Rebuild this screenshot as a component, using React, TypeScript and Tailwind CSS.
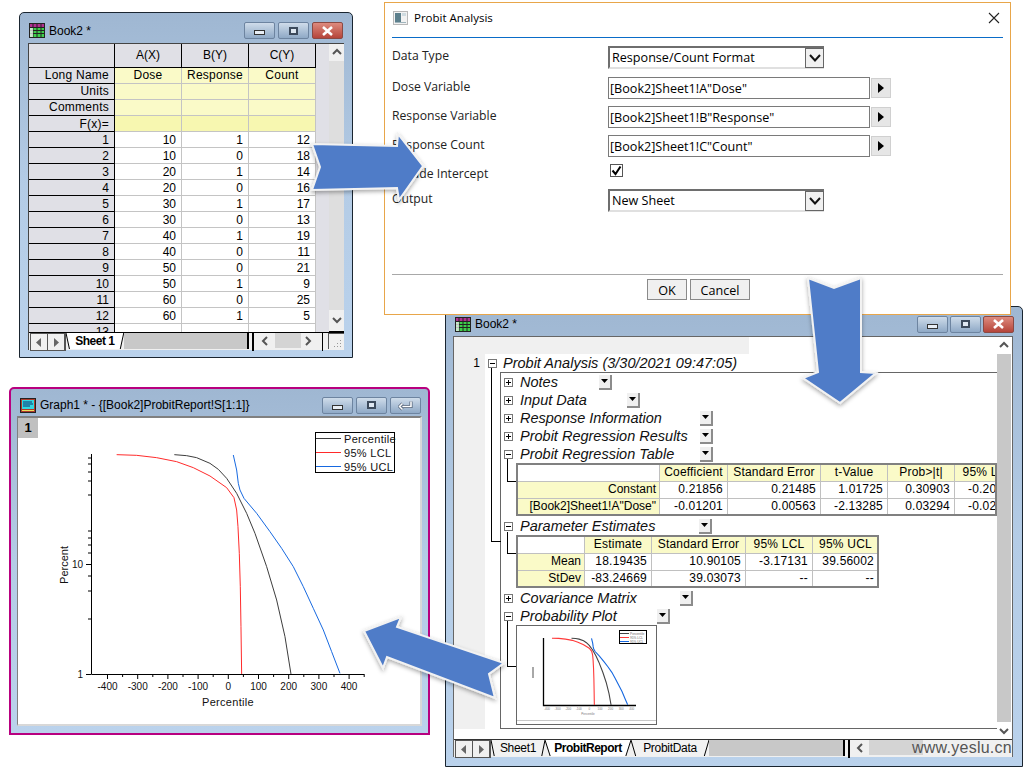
import type { ReactNode } from 'react';

const FONT = "font-['Liberation_Sans',Arial,sans-serif]";

const sheetRows = [
  ['1', '10', '1', '12'],
  ['2', '10', '0', '18'],
  ['3', '20', '1', '14'],
  ['4', '20', '0', '16'],
  ['5', '30', '1', '17'],
  ['6', '30', '0', '13'],
  ['7', '40', '1', '19'],
  ['8', '40', '0', '11'],
  ['9', '50', '0', '21'],
  ['10', '50', '1', '9'],
  ['11', '60', '0', '25'],
  ['12', '60', '1', '5'],
  ['13', '', '', ''],
];

const labelRows = [
  { name: 'Long Name', cells: ['Dose', 'Response', 'Count'], bg: 'bg-[#fafac8]', leading: '' },
  { name: 'Units', cells: ['', '', ''], bg: 'bg-[#fafac8]', leading: '' },
  { name: 'Comments', cells: ['', '', ''], bg: 'bg-[#fafac8]', leading: '' },
  { name: 'F(x)=', cells: ['', '', ''], bg: 'bg-[#f7f7b0]', leading: 'leading-[17px]' },
];

const blackCurve = '493,104 530,107 560,113 600,130 625,148 650,175 680,220 710,280 735,340 770,440 800,540 825,650 843,762';
const redCurve = '320,104 380,106 440,113 500,125 550,143 600,168 650,203 672,233 680,270 684,320 688,400 691,500 693,620 695,762';
const blueCurve = '670,105 680,150 685,190 690,210 702,235 740,280 780,335 815,385 850,440 880,500 910,565 940,630 965,695 990,760';

function SheetIcon() {
  return (
    <svg width="16" height="15" viewBox="0 0 16 15" className="shrink-0">
      <rect x="0.5" y="0.5" width="15" height="14" fill="#3ecf4a" stroke="#222" />
      <rect x="1" y="1" width="14" height="3" fill="#b03090" />
      <path d="M1 4.5H15M1 7.5H15M1 10.5H15M4 1V14M8 1V14M12 1V14" stroke="#222" strokeWidth="1" />
      <rect x="1" y="5" width="3" height="9" fill="#f4f4f4" opacity="0.75" />
    </svg>
  );
}

function GraphIcon() {
  return (
    <svg width="16" height="15" viewBox="0 0 16 15" className="shrink-0">
      <rect x="0.5" y="0.5" width="15" height="14" fill="#b03a2a" stroke="#222" />
      <rect x="2" y="2" width="12" height="9" fill="#31d8e0" />
      <path d="M3 4H12M3 6H13M3 8H10" stroke="#103070" strokeWidth="1" />
      <rect x="2" y="12" width="12" height="1" fill="#e8e060" />
    </svg>
  );
}

function CaptionButton({ kind }: { kind: 'min' | 'max' | 'close' | 'back' }) {
  const isClose = kind === 'close';
  return (
    <div
      className={`flex h-[17px] w-[31px] items-center justify-center rounded-[2px] border ${
        isClose ? 'border-[#8a4a44] bg-linear-to-b from-[#dd8a7e] to-[#b5443a]' : 'border-[#6d84a0] bg-linear-to-b from-[#cfdcea] to-[#8fa9c6]'
      }`}
    >
      {kind === 'min' && <div className="mt-1 h-[5px] w-[11px] border border-[#333] bg-[#e8eef5]" />}
      {kind === 'max' && <div className="h-[8px] w-[9px] border-2 border-[#3c4a5c] bg-[#dfe8f2]" />}
      {kind === 'close' && (
        <svg width="13" height="10" viewBox="0 0 13 10">
          <path d="M2 1L11 9M11 1L2 9" stroke="#fff" strokeWidth="2.6" />
        </svg>
      )}
      {kind === 'back' && (
        <svg width="15" height="11" viewBox="0 0 15 11">
          <path d="M13 1.5V6.5H4.5M4.5 3.5L1.5 6.5L4.5 9.5" fill="none" stroke="#4a5a70" strokeWidth="3" />
          <path d="M13 1.5V6.5H4.5M4.5 3.5L1.5 6.5L4.5 9.5" fill="none" stroke="#fff" strokeWidth="1.6" />
        </svg>
      )}
    </div>
  );
}

function ScrollArrow({ dir }: { dir: 'up' | 'down' | 'left' | 'right' }) {
  const d = { up: 'M1 6L5 2L9 6', down: 'M1 2L5 6L9 2', left: 'M6 1L2 5L6 9', right: 'M2 1L6 5L2 9' }[dir];
  return (
    <svg width="10" height="10" viewBox="0 0 10 10" className="shrink-0">
      <path d={d} fill="none" stroke="#555" strokeWidth="2" />
    </svg>
  );
}

function NavButton({ dir }: { dir: 'left' | 'right' }) {
  return (
    <div className="flex h-[16px] w-[17px] items-center justify-center border-r border-[#555] bg-[#f0f0f0]">
      <svg width="6" height="9" viewBox="0 0 6 9">
        <path d={dir === 'left' ? 'M5 0V9L0 4.5Z' : 'M1 0V9L6 4.5Z'} fill="#666" />
      </svg>
    </div>
  );
}

function SheetTab({ label, width, active }: { label: string; width: string; active?: boolean }) {
  return (
    <div className={`relative flex h-[16px] items-center justify-center ${width} ${active ? 'font-bold tracking-[-0.5px]' : 'tracking-[-0.3px]'}`}>
      <svg className="absolute inset-0 h-full w-full" preserveAspectRatio="none" viewBox="0 0 100 16">
        <polygon points="0,0 100,0 94,16 6,16" fill={active ? '#fff' : '#f2f2f2'} />
        <path d="M0 0L6 16M100 0L94 16" stroke="#000" strokeWidth="1" vectorEffect="non-scaling-stroke" fill="none" />
      </svg>
      <span className="relative">{label}</span>
    </div>
  );
}

function Worksheet() {
  return (
    <div className="absolute left-[19px] top-[12px] flex h-[346px] w-[334px] flex-col rounded-t-[5px] border border-[#1a2530] bg-linear-to-b from-[#9fb7d2] via-[#b4cce6] to-[#bad2ec] px-[8px] pb-[7px]">
      <div className="flex h-[30px] shrink-0 items-center pt-[5px]">
        <div className="ml-[1px]"><SheetIcon /></div>
        <span className="ml-[4px] text-[12px] text-black">Book2 *</span>
        <div className="ml-auto mr-[1px] flex gap-[3px]">
          <CaptionButton kind="min" />
          <CaptionButton kind="max" />
          <CaptionButton kind="close" />
        </div>
      </div>
      <div className="flex min-h-0 flex-1 flex-col border-l border-t border-[#444] bg-white">
        <div className="flex min-h-0 flex-1 overflow-hidden">
          <div className="grid w-[287px] shrink-0 grid-cols-[86px_67px_67px_67px] auto-rows-[16px] content-start text-[12px] leading-[15px] text-black">
            <div className="h-[24px] border-b border-r border-black bg-[#e0e0e6]" />
            {['A(X)', 'B(Y)', 'C(Y)'].map((name) => (
              <div key={name} className="h-[24px] border-b border-r border-black bg-[#e0e0e6] text-center leading-[23px]">
                {name}
              </div>
            ))}
            <div className="col-span-4 mt-[8px] grid grid-cols-[86px_67px_67px_67px] auto-rows-[16px]">
              {labelRows.map((row) => (
                <div key={row.name} className={`contents ${row.leading}`}>
                  <div className={`border-b border-r border-black bg-[#e0e0e6] pr-[5px] text-right tracking-[0.25px] ${row.leading}`}>{row.name}</div>
                  {row.cells.map((cell, index) => (
                    <div key={index} className={`border-b border-r border-[#c4c4c4] text-center tracking-[0.25px] ${row.bg}`}>
                      {cell}
                    </div>
                  ))}
                </div>
              ))}
              {sheetRows.map((row) => (
                <div key={row[0]} className="contents">
                  <div className="border-b border-r border-black bg-[#e0e0e6] pr-[5px] text-right leading-[17px]">{row[0]}</div>
                  {row.slice(1).map((cell, index) => (
                    <div key={index} className="border-b border-r border-[#c4c4c4] bg-white pr-[5px] text-right leading-[17px]">
                      {cell}
                    </div>
                  ))}
                </div>
              ))}
            </div>
          </div>
          <div className="w-[13px] shrink-0 bg-[#e0e0e6]" />
          <div className="flex w-[16px] shrink-0 flex-col items-center bg-[#dedede]">
            <div className="flex h-[17px] w-full items-center justify-center bg-[#f0f0f0]">
              <ScrollArrow dir="up" />
            </div>
            <div className="flex-1" />
            <div className="flex h-[22px] w-full items-center justify-center border-b border-black bg-[#f0f0f0]">
              <ScrollArrow dir="down" />
            </div>
          </div>
        </div>
        <div className="flex h-[18px] shrink-0 items-start border-t border-black bg-[#f0f0f0] text-[12px] text-black">
          <div className="ml-[1px] flex border border-[#555]">
            <NavButton dir="left" />
            <NavButton dir="right" />
          </div>
          <SheetTab label="Sheet 1" width="w-[60px]" active />
          <div className="h-[16px] w-[130px] border-r-2 border-black bg-[#c8c8c8]" />
          <div className="ml-[3px] h-[18px] w-[9px] border-l-2 border-black" />
          <div className="mt-[3px]"><ScrollArrow dir="left" /></div>
          <div className="ml-[4px] h-[15px] w-[27px] bg-[#d4d4d4]" />
          <div className="ml-[3px] mt-[3px]"><ScrollArrow dir="right" /></div>
          <div className="ml-[5px] h-[18px] w-[5px] border-r border-black" />
          <div className="ml-[5px] flex h-[16px] w-[16px] items-end justify-end border-l border-t border-[#555] bg-[#f0f0f0] pb-[1px] pr-[2px]">
            <svg width="9" height="9" viewBox="0 0 9 9">
              <path d="M7 1H8V2H7ZM4 4H5V5H4ZM7 4H8V5H7ZM1 7H2V8H1ZM4 7H5V8H4ZM7 7H8V8H7Z" fill="#999" />
            </svg>
          </div>
        </div>
      </div>
    </div>
  );
}

function FieldArrow() {
  return (
    <div className="flex h-[20px] w-[20px] items-center justify-center border border-[#d0d0d0] bg-[#e6e6e6]">
      <svg width="6" height="10" viewBox="0 0 6 10">
        <path d="M0 0V10L6 5Z" fill="#000" />
      </svg>
    </div>
  );
}

function ComboBox({ value }: { value: string }) {
  return (
    <div className="flex h-[23px] w-[216px] items-center border-b-2 border-l-2 border-t-2 border-[#6e6e6e] border-b-[#e0e0e0] bg-white pl-[2px] text-[12.6px]">
      <span className="flex-1 pt-[1px]">{value}</span>
      <div className="flex h-[20px] w-[19px] items-center justify-center border border-[#666] bg-[#f0f0f0]">
        <svg width="12" height="8" viewBox="0 0 12 8">
          <path d="M1 1L6 6.5L11 1" fill="none" stroke="#111" strokeWidth="2" />
        </svg>
      </div>
    </div>
  );
}

function VariableField({ value }: { value: string }) {
  return (
    <div className="flex items-center gap-[1px]">
      <div className="flex h-[22px] w-[262px] items-center border border-[#7a7a7a] bg-white pl-[1px] pt-[2px] text-[12.6px]">{value}</div>
      <FieldArrow />
    </div>
  );
}

function FormRow({ label, height, children }: { label: string; height: string; children?: ReactNode }) {
  return (
    <div className={`flex items-start ${height}`}>
      <div className="mt-[2px] w-[215px] shrink-0 text-[12.2px] leading-[18px] text-[#222]">{label}</div>
      {children}
    </div>
  );
}

function ProbitDialog() {
  return (
    <div className="absolute left-[384px] top-[2px] flex h-[313px] w-[627px] flex-col border border-[#e8a64a] bg-white px-[7px] font-['Open_Sans',Arial,sans-serif] text-[12px] text-black">
      <div className="flex h-[35px] shrink-0 items-center border-b border-[#0a6cc8] pb-[4px]">
        <svg width="15" height="14" viewBox="0 0 15 14" className="ml-[1px] shrink-0">
          <rect x="0.5" y="0.5" width="14" height="13" fill="#f2f2f2" stroke="#b8b8b8" />
          <rect x="2" y="2" width="6" height="9" fill="#5c7f8c" />
          <rect x="9" y="2" width="4" height="3" fill="#cfdbe0" />
          <rect x="2" y="11" width="11" height="1" fill="#9fb4bc" />
        </svg>
        <span className="ml-[6px] text-[11.5px]">Probit Analysis</span>
        <svg width="12" height="12" viewBox="0 0 12 12" className="ml-auto mr-[3px]">
          <path d="M1 1L11 11M11 1L1 11" stroke="#222" strokeWidth="1.1" />
        </svg>
      </div>
      <div className="mt-[7px] flex flex-1 flex-col">
        <FormRow label="Data Type" height="h-[31px]">
          <div className="ml-[1px] mt-[1px]"><ComboBox value="Response/Count Format" /></div>
        </FormRow>
        <FormRow label="Dose Variable" height="h-[29px]">
          <div className="ml-[1px] mt-[1px]"><VariableField value={'[Book2]Sheet1!A"Dose"'} /></div>
        </FormRow>
        <FormRow label="Response Variable" height="h-[29px]">
          <div className="ml-[1px] mt-[1px]"><VariableField value={'[Book2]Sheet1!B"Response"'} /></div>
        </FormRow>
        <FormRow label="Response Count" height="h-[29px]">
          <div className="ml-[1px] mt-[1px]"><VariableField value={'[Book2]Sheet1!C"Count"'} /></div>
        </FormRow>
        <FormRow label="Include Intercept" height="h-[25px]">
          <div className="ml-[3px] mt-[1px] flex h-[13px] w-[13px] items-center justify-center border border-[#555] bg-white">
            <svg width="11" height="11" viewBox="0 0 11 11">
              <path d="M1.5 5.5L4.5 9L9.5 1.5" fill="none" stroke="#000" strokeWidth="2" />
            </svg>
          </div>
        </FormRow>
        <FormRow label="Output" height="h-[86px]">
          <div className="ml-[1px] mt-[1px]"><ComboBox value="New Sheet" /></div>
        </FormRow>
        <div className="flex flex-1 items-start gap-[3px] border-t border-[#a8a8a8] pl-[255px] pt-[4px] text-[12.6px]">
          <div className="flex h-[21px] w-[40px] items-center justify-center border border-[#8a8a8a] bg-[#f0f0f0] pt-[3px]">OK</div>
          <div className="flex h-[21px] w-[60px] items-center justify-center border border-[#8a8a8a] bg-[#f0f0f0] pt-[3px]">Cancel</div>
        </div>
      </div>
    </div>
  );
}

function ExpandBox({ open }: { open?: boolean }) {
  return (
    <div className="flex h-[9px] w-[9px] shrink-0 items-center justify-center border border-[#777] bg-white">
      <svg width="7" height="7" viewBox="0 0 7 7">
        <path d={open ? 'M1 3.5H6' : 'M1 3.5H6M3.5 1V6'} stroke="#000" strokeWidth="1" />
      </svg>
    </div>
  );
}

function MenuButton() {
  return (
    <div className="flex h-[15px] w-[13px] shrink-0 items-center justify-center border-b-2 border-r-2 border-[#8c8c8c] bg-[#f0f0f0]">
      <svg width="7" height="4" viewBox="0 0 7 4">
        <path d="M0 0H7L3.5 4Z" fill="#000" />
      </svg>
    </div>
  );
}

function TreeRow({ label, open, labelWidth }: { label: string; open?: boolean; labelWidth: string }) {
  return (
    <div className="flex h-[18px] items-center pl-[3px]">
      <ExpandBox open={open} />
      <div className={`ml-[7px] shrink-0 whitespace-nowrap text-[14.5px] italic leading-[18px] text-[#111] ${labelWidth}`}>{label}</div>
      <MenuButton />
    </div>
  );
}

function ResultTable({ columns, width, head, rows }: { columns: string; width: string; head: string[]; rows: string[][] }) {
  return (
    <div className={`ml-[15px] h-[53px] ${width} overflow-hidden border-2 border-[#808080] text-[12px] leading-[15px] tracking-[0.2px] text-black`}>
      <div className={`grid ${columns} auto-rows-[17px]`}>
        <div className="border-b border-r border-[#c0c0c0] bg-white" />
        {head.map((cell) => (
          <div key={cell} className="border-b border-r border-[#c0c0c0] bg-[#fafac8] text-center">{cell}</div>
        ))}
        {rows.map((row) => (
          <div key={row[0]} className="contents">
            <div className="border-b border-r border-[#c0c0c0] bg-[#fafac8] pr-[3px] text-right tracking-normal">{row[0]}</div>
            {row.slice(1).map((cell, index) => (
              <div key={index} className="whitespace-nowrap border-b border-r border-[#c0c0c0] bg-white pr-[4px] text-right">{cell}</div>
            ))}
          </div>
        ))}
      </div>
    </div>
  );
}

function Thumbnail() {
  return (
    <svg viewBox="0 0 139 98" className="h-[98px] w-[139px]">
      <rect width="139" height="96" fill="#fff" />
      <path d="M26.5 12V79.5H119" fill="none" stroke="#000" strokeWidth="1.3" />
      <g transform="translate(-1.2 1.65) scale(0.113 0.1015)" fill="none">
        <polyline points={blackCurve} stroke="#444" strokeWidth="1.1" vectorEffect="non-scaling-stroke" />
        <polyline points={redCurve} stroke="#ff3a3a" strokeWidth="1.1" vectorEffect="non-scaling-stroke" />
        <polyline points={blueCurve} stroke="#1668e0" strokeWidth="1.1" vectorEffect="non-scaling-stroke" />
      </g>
      <rect x="102.5" y="4.5" width="27" height="13" fill="#fff" stroke="#000" />
      <path d="M103 7.5H112" stroke="#444" />
      <path d="M103 11.5H112" stroke="#ff3a3a" />
      <path d="M103 15.5H112" stroke="#1668e0" />
      <text x="113" y="8.5" fontSize="3.2" fill="#666">Percentile</text>
      <text x="113" y="12.5" fontSize="3.2" fill="#666">95% LCL</text>
      <text x="113" y="16.5" fontSize="3.2" fill="#666">95% UCL</text>
      <g fontSize="3" fill="#777" textAnchor="middle">
        {['-400', '-300', '-200', '-100', '0', '100', '200', '300', '400'].map((tick, index) => (
          <text key={tick} x={30 + index * 10.6} y="84">{tick}</text>
        ))}
        <text x="71" y="89">Percentile</text>
      </g>
      <rect x="15" y="41" width="2" height="11" fill="#a8a8a8" />
      <rect y="94" width="139" height="1" fill="#c8c8c8" />
    </svg>
  );
}

function ReportWindow() {
  return (
    <div className="absolute left-[445px] top-[306px] flex h-[461px] w-[578px] flex-col rounded-t-[5px] border border-[#1a2530] bg-linear-to-b from-[#9fb7d2] via-[#b4cce6] to-[#bad2ec] pb-[9px] pl-[7px] pr-[9px]">
      <div className="flex h-[29px] shrink-0 items-center pt-[5px]">
        <div className="ml-[2px]"><SheetIcon /></div>
        <span className="ml-[4px] text-[12px] text-black">Book2 *</span>
        <div className="ml-auto mr-[-1px] flex gap-[2px]">
          <CaptionButton kind="min" />
          <CaptionButton kind="max" />
          <CaptionButton kind="close" />
        </div>
      </div>
      <div className="flex min-h-0 flex-1 flex-col border border-b-0 border-[#666] bg-white">
        <div className="flex min-h-0 flex-1">
          <div className="relative w-[543px] shrink-0 overflow-hidden">
            <div className="h-[17px] w-[295px] bg-[#f0f0f0]" />
            <div className="flex">
              <div className="h-[375px] w-[31px] shrink-0 bg-[#f0f0f0] pr-[5px] text-right text-[12px] leading-[18px] text-black">1</div>
              <div className="min-w-0 flex-1">
                <div className="flex h-[18px] items-center pl-[3px]">
                  <ExpandBox open />
                  <span className="ml-[6px] whitespace-nowrap text-[14.5px] italic leading-[18px] text-[#111]">Probit Analysis (3/30/2021 09:47:05)</span>
                </div>
                <div className="relative ml-[15px] h-[357px] border-b border-l border-t border-[#666]">
                  <TreeRow label="Notes" labelWidth="w-[79px]" />
                  <TreeRow label="Input Data" labelWidth="w-[107px]" />
                  <TreeRow label="Response Information" labelWidth="w-[180px]" />
                  <TreeRow label="Probit Regression Results" labelWidth="w-[180px]" />
                  <TreeRow label="Probit Regression Table" open labelWidth="w-[180px]" />
                  <ResultTable
                    columns="grid-cols-[142px_68px_93px_67px_67px_67px]"
                    width="w-[481px]"
                    head={['Coefficient', 'Standard Error', 't-Value', 'Prob>|t|', '95% LCL']}
                    rows={[
                      ['Constant', '0.21856', '0.21485', '1.01725', '0.30903', '-0.20253'],
                      ['[Book2]Sheet1!A"Dose"', '-0.01201', '0.00563', '-2.13285', '0.03294', '-0.02305'],
                    ]}
                  />
                  <div className="mt-[1px]"><TreeRow label="Parameter Estimates" open labelWidth="w-[179px]" /></div>
                  <ResultTable
                    columns="grid-cols-[67px_67px_94px_67px_66px]"
                    width="w-[363px]"
                    head={['Estimate', 'Standard Error', '95% LCL', '95% UCL']}
                    rows={[
                      ['Mean', '18.19435', '10.90105', '-3.17131', '39.56002'],
                      ['StDev', '-83.24669', '39.03073', '--', '--'],
                    ]}
                  />
                  <div className="mt-[1px]"><TreeRow label="Covariance Matrix" labelWidth="w-[160px]" /></div>
                  <TreeRow label="Probability Plot" open labelWidth="w-[137px]" />
                  <div className="ml-[15px] h-[100px] w-[141px] border border-[#666] bg-white">
                    <Thumbnail />
                  </div>
                  <div className="absolute left-[6px] top-[86px] h-[23px] w-[9px] border-b border-l border-black" />
                  <div className="absolute left-[6px] top-[159px] h-[22px] w-[9px] border-b border-l border-black" />
                  <div className="absolute left-[6px] top-[248px] h-[46px] w-[9px] border-b border-l border-black" />
                </div>
                <div className="absolute left-[37px] top-[31px] h-[174px] w-[10px] border-b border-l border-black" />
              </div>
            </div>
          </div>
          <div className="flex w-[14px] shrink-0 flex-col items-center bg-white">
            <div className="flex h-[17px] w-full items-center justify-center"><ScrollArrow dir="up" /></div>
            <div className="h-[368px] w-full bg-[#c8c8c8]" />
            <div className="mt-[3px] flex h-[14px] w-full items-center justify-center"><ScrollArrow dir="down" /></div>
          </div>
        </div>
        <div className="flex h-[18px] shrink-0 items-start border-t border-[#333] bg-[#f0f0f0] text-[12px] text-black">
          <div className="ml-[1px] flex border border-[#555]">
            <NavButton dir="left" />
            <NavButton dir="right" />
          </div>
          <SheetTab label="Sheet1" width="w-[54px]" />
          <SheetTab label="ProbitReport" width="w-[86px]" active />
          <SheetTab label="ProbitData" width="w-[78px]" />
          <div className="h-[16px] w-[136px] border-r-2 border-black bg-[#c8c8c8]" />
          <div className="ml-[3px] h-[18px] w-[8px] border-l-2 border-black" />
          <div className="mt-[3px]"><ScrollArrow dir="left" /></div>
          <div className="ml-[3px] h-[15px] w-[54px] bg-[#d4d4d4]" />
        </div>
      </div>
    </div>
  );
}

function PlotDrawing() {
  return (
    <svg viewBox="0 0 403 307" className="h-[307px] w-[403px]">
      {/* curve points were read off the picture at 3x, hence the scale */}
      <g transform="translate(-8 2) scale(0.3333)" fill="none" strokeWidth="3" strokeLinejoin="round">
        <polyline points={blackCurve} stroke="#3c3c3c" />
        <polyline points={redCurve} stroke="#ff2a2a" />
        <polyline points={blueCurve} stroke="#1668e0" />
      </g>
      <path d="M73.5 36V256.5H346" fill="none" stroke="#000" strokeWidth="1" />
      <path d="M68 256.5H73M68 146.5H73M70 40H73M70 46H73M70 54H73M70 63H73M70 77H73M70 113H73M70 120H73M70 127H73M70 135H73M70 158H73M70 173H73M70 201H73" stroke="#000" strokeWidth="1" />
      {[-400, -300, -200, -100, 0, 100, 200, 300, 400].map((tick) => {
        const x = 89.5 + ((tick + 400) / 100) * 30.2;
        return (
          <g key={tick}>
            <path d={`M${x} 256V261`} stroke="#000" />
            <path d={`M${x + 15.1} 256V259`} stroke="#000" />
            <text x={x} y="272" textAnchor="middle" fontSize="10" fill="#111">{tick}</text>
          </g>
        );
      })}
      <text x="65" y="260" textAnchor="end" fontSize="10" fill="#111">1</text>
      <text x="65" y="150" textAnchor="end" fontSize="10" fill="#111">10</text>
      <text x="210" y="288" textAnchor="middle" fontSize="11" fill="#111" letterSpacing="0.3">Percentile</text>
      <text transform="translate(50 147) rotate(-90)" textAnchor="middle" fontSize="11" fill="#111">Percent</text>
      <rect x="297.5" y="14.5" width="79" height="40" fill="#fff" stroke="#000" strokeWidth="1" />
      <path d="M298 20.5H323" stroke="#3c3c3c" />
      <path d="M298 34.5H323" stroke="#ff2a2a" />
      <path d="M298 48.5H323" stroke="#1668e0" />
      <text x="326" y="24.5" fontSize="11" fill="#111" letterSpacing="0.3">Percentile</text>
      <text x="326" y="38.5" fontSize="11" fill="#111" letterSpacing="0.3">95% LCL</text>
      <text x="326" y="52.5" fontSize="11" fill="#111" letterSpacing="0.3">95% UCL</text>
    </svg>
  );
}

function GraphWindow() {
  return (
    <div className="absolute left-[9px] top-[387px] flex h-[348px] w-[421px] flex-col rounded-t-[5px] border-2 border-[#b8007f] bg-linear-to-b from-[#9fb7d2] via-[#b4cce6] to-[#bad2ec] px-[6px] pb-[7px]">
      <div className="flex h-[27px] shrink-0 items-center pt-[5px]">
        <div className="ml-[3px]"><GraphIcon /></div>
        <span className="ml-[4px] text-[12px] text-black">{'Graph1 * - {[Book2]ProbitReport!S[1:1]}'}</span>
        <div className="ml-auto mr-[1px] flex gap-[3px]">
          <CaptionButton kind="min" />
          <CaptionButton kind="max" />
          <CaptionButton kind="back" />
        </div>
      </div>
      <div className="relative min-h-0 flex-1 overflow-hidden border-b-2 border-l-1 border-r-2 border-t-2 border-b-[#d8d8d8] border-l-[#808080] border-r-[#d8d8d8] border-t-[#808080] bg-white">
        <div className="absolute left-0 top-0 flex h-[20px] w-[20px] items-center justify-center bg-[#c0c0c0] text-[13px] font-bold text-black">1</div>
        <PlotDrawing />
      </div>
    </div>
  );
}

function BigArrows() {
  return (
    <svg viewBox="0 0 1024 768" className="pointer-events-none absolute inset-0 h-[768px] w-[1024px]">
      <defs>
        <filter id="arrowShadow" x="-20%" y="-20%" width="140%" height="140%">
          <feDropShadow dx="0" dy="2" stdDeviation="2" floodColor="#000" floodOpacity="0.35" />
        </filter>
      </defs>
      <g fill="#4f7cc8" stroke="#f2f2f2" strokeWidth="2" filter="url(#arrowShadow)">
        <polygon points="312,144 320,167 312,190 397,188 399,200 423,166 398,134 397,146" />
        <polygon points="808,278 834,288 861,278 861,372 876,373 840,403 803,378 818,372" />
        <polygon points="364,631 401,617 397,627 504,663 489,674 495,698 387,657 383,668" />
      </g>
    </svg>
  );
}

export default function App() {
  return (
    <div className={`relative h-[768px] w-[1024px] overflow-hidden bg-white ${FONT}`}>
      <Worksheet />
      <ReportWindow />
      <ProbitDialog />
      <GraphWindow />
      <BigArrows />
      <span className="absolute left-[912px] top-[737px] text-[16px] leading-[22px] tracking-[0.25px] text-[#555]">www.yeslu.cn</span>
    </div>
  );
}
